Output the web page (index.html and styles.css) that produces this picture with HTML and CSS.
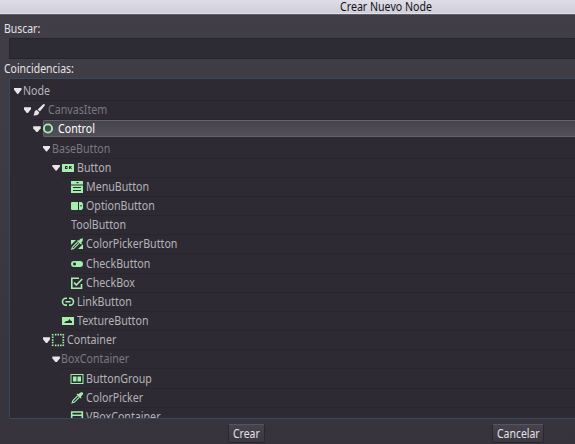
FILE: index.html
```html
<!DOCTYPE html>
<html lang="es">
<head>
<meta charset="utf-8">
<title>Crear Nuevo Node</title>
<link rel="stylesheet" href="styles.css">
</head>
<body>
<header class="titlebar"><span class="t">Crear Nuevo Node</span></header>
<main class="dialog">
<label class="caption"><span class="t">Buscar:</span></label>
<div class="search"></div>
<label class="caption second"><span class="t">Coincidencias:</span></label>
<div class="tree">
<div class="row l0"><i class="arrow"></i><div class="item"><span class="t">Node</span></div></div>
<div class="row l1 dim"><i class="arrow"></i><div class="item"><svg class="white" viewBox="0 0 12 12"><path d="M11.300 0q1.100.5.300 1.800L6.900 7.500 4.700 5.500 9.900.5q.8-.7 1.400-.5M3.900 6.100l2.300 2.100c-.3 2.700-2.800 3.600-6.200 3.100 1.500-.8 1-1.800 1.500-3.300.4-1.200 1.200-1.700 2.400-1.900"/></svg><span class="t">CanvasItem</span></div></div>
<div class="row l2 selected"><i class="arrow"></i><div class="item"><svg viewBox="0 0 12 12"><circle class="line2" cx="5" cy="5.500" r="4.100"/></svg><span class="t">Control</span></div></div>
<div class="row l3 dim"><i class="arrow"></i><div class="item"><span class="t">BaseButton</span></div></div>
<div class="row l4"><i class="arrow"></i><div class="item"><svg viewBox="0 0 12 12"><path fill-rule="evenodd" d="M0 2h12v8H0zM3 4v3h2.500V4zM4 5h.8v1H4zM7 4v3h1V6l1 1h1L9 5.500 10 4H9L8 5V4z"/></svg><span class="t">Button</span></div></div>
<div class="row l5"><div class="item"><svg viewBox="0 0 12 12"><path fill-rule="evenodd" d="M0 0h12v3.500H0zM5 1h3L6.500 2.500zM0 4.500h12V12H0zM2 6v1h8V6zM2 9v1h8V9z"/></svg><span class="t">MenuButton</span></div></div>
<div class="row l5"><div class="item"><svg viewBox="0 0 12 12"><path fill-rule="evenodd" d="M1 2h6v8H1Q0 10 0 9V3Q0 2 1 2M8 2h2.500L12 3.500v5L10.500 10H8zM9 5.300h2L10 7z"/></svg><span class="t">OptionButton</span></div></div>
<div class="row l5"><div class="item"><span class="t">ToolButton</span></div></div>
<div class="row l5"><div class="item"><svg viewBox="0 0 12 12"><path d="M0 2h5L0 7zM12 6v5H7zM9 1l3-.7-.5 3.200-1.300 1 .8 1-1 1L6 3l1-1 1 .7z"/><path class="thin" d="M6.600 4 1.300 9.200l-.6 2 2-.6L8 5.400"/></svg><span class="t">ColorPickerButton</span></div></div>
<div class="row l5"><div class="item"><svg viewBox="0 0 12 12"><path fill-rule="evenodd" d="M3 3h6a3 3 0 0 1 0 6H3a3 3 0 0 1 0-6M3.500 4.500a1.500 1.500 0 1 0 .01 3 1.500 1.500 0 0 0-.01-3"/></svg><span class="t">CheckButton</span></div></div>
<div class="row l5"><div class="item"><svg viewBox="0 0 12 12"><path class="line" d="M8 1.300H.8v9.900h9.700V7M3 5.500 5.300 8 11.200 2"/></svg><span class="t">CheckBox</span></div></div>
<div class="row l4"><div class="item"><svg viewBox="0 0 12 12"><path class="line" d="M5 2.300H3.900a3.400 3.400 0 0 0 0 6.800H5M7 2.300h1.100a3.400 3.400 0 0 1 0 6.800H7M3.500 5.700h5"/></svg><span class="t">LinkButton</span></div></div>
<div class="row l4"><div class="item"><svg viewBox="0 0 12 12"><path fill-rule="evenodd" d="M0 2h12v8H0zM2 8h8V6H9L7.500 4 6 6H4z"/></svg><span class="t">TextureButton</span></div></div>
<div class="row l3"><i class="arrow"></i><div class="item"><svg viewBox="0 0 12 12"><path class="dots" d="M.7 0v12M11.300 0v12M2.900.7h7M2.900 11.300h7"/></svg><span class="t">Container</span></div></div>
<div class="row l4 dim"><i class="arrow"></i><div class="item"><span class="t">BoxContainer</span></div></div>
<div class="row l5"><div class="item"><svg viewBox="0 0 12 12"><path fill-rule="evenodd" d="M-.5 1h13v10h-13zM.5 2v8h11V2zM2 3.500h3.500v5H2zM6.500 3.500H10v5H6.500z"/></svg><span class="t">ButtonGroup</span></div></div>
<div class="row l5"><div class="item"><svg viewBox="0 0 12 12"><path d="M8.500 1.200Q10-.4 11.500.5T11 3.500L9.800 4.700l.7.800-1 1L5.500 2.600l1-1 .8.700z"/><path class="thin" d="M6.600 3.800 1.900 8.500l-.8 2.400 2.400-.8L8.200 5.400"/></svg><span class="t">ColorPicker</span></div></div>
<div class="row l5"><div class="item"><svg viewBox="0 0 12 12"><path class="line" d="M.7 1h10.600v10.300H.7zM1 4.300h10M1 8h10"/></svg><span class="t">VBoxContainer</span></div></div>
</div>
<footer class="actions"><button class="create"><span class="t">Crear</span></button><button class="cancel"><span class="t">Cancelar</span></button></footer>
</main>
</body>
</html>
```
FILE: styles.css
```css
* { box-sizing: border-box; }
body {
  margin: 0;
  width: 575px;
  height: 444px;
  overflow: hidden;
  background: #36333d;
  font: 12px/18px "Noto Sans", sans-serif;
  color: #e4e2e6;
}
.t {
  display: inline-block;
  white-space: nowrap;
  transform: scaleX(.87);
  transform-origin: 0 50%;
}
.titlebar {
  height: 15px;
  padding-left: 340px;
  line-height: 13px;
  color: #141318;
  background: linear-gradient(#dfdde8, #d0ced8 13px, #e4e2e8 13px, #e4e2e8 14px, #5f5c68 14px);
}
.titlebar .t { transform: scaleX(.885); }
.tree .t { transform: scaleX(.888); }
.dialog {
  height: 429px;
  overflow: hidden;
  background: linear-gradient(#413e48, #36333d);
}
.caption {
  display: block;
  height: 23px;
  padding: 5px 0 0 3.500px;
}
.search {
  height: 21px;
  margin-left: 9px;
  border: 1px solid #252429;
  border-width: 1px 0 1px 1px;
  background: #2d2b33;
}
.caption.second { height: 19px; padding-top: 1px; }
.tree {
  height: 341px;
  margin-left: 9px;
  padding: 3px 0 0 4px;
  overflow: hidden;
  border: 1px solid #35495f;
  border-right: 0;
  border-radius: 2px 0 0 2px;
  background: #2d2a33;
  color: #b5b3b7;
}
.row { display: flex; height: 19.180px; }
.l1 { padding-left: 9.600px; }
.l2 { padding-left: 19.200px; }
.l3 { padding-left: 28.800px; }
.l4 { padding-left: 38.400px; }
.l5 { padding-left: 57px; }
.arrow {
  width: 7.500px;
  height: 6px;
  margin: 6px 1.500px 0 0;
  background: #e8e6e9;
  clip-path: polygon(0 0, 100% 0, 100% 30%, 55% 100%, 45% 100%, 0 30%);
}
.row.l4 > .item:first-child { margin-left: 9px; }
.item {
  flex: 1;
  display: flex;
  height: 19px;
  border-bottom: 1px solid #28262c;
}
.dim { color: #7b797e; }
.item svg {
  width: 12px;
  height: 12px;
  margin: 3px 3px 0 0;
  flex: none;
  overflow: visible;
  fill: #a5efac;
}
.l4 .item svg { margin-left: .6px; }
.item svg.white { fill: #e5e3e6; }
.line, .line2, .thin, .dots { fill: none; stroke: #a5efac; stroke-width: 1.600; }
.line2 { stroke-width: 1.900; }
.thin { stroke-width: 1.100; }
.dots { stroke-width: 1.700; stroke-dasharray: 1.500 1.100; }
.selected { color: #fff; }
.selected .item {
  height: 17px;
  margin-left: 1px;
  border: 1px solid #65636a;
  border-right: 0;
  border-radius: 2px 0 0 2px;
  background: linear-gradient(#45434b, #514f57);
}
.selected .t { margin-top: -1px; }
.selected .item svg { margin: 2px 2.700px 0 -1px; }
.actions {
  display: flex;
  justify-content: space-between;
  height: 25px;
  padding: 5px 31px 0 228px;
}
.actions button {
  height: 19px;
  padding: 0 0 0 4px;
  border: 1px solid #292730;
  border-top-color: #57545f;
  border-radius: 2px;
  background: linear-gradient(#46434e, #3a3741);
  font: inherit;
  line-height: 15px;
  text-align: left;
  color: #e4e2e6;
}
.create { width: 37px; }
.cancel { width: 52px; }
```
